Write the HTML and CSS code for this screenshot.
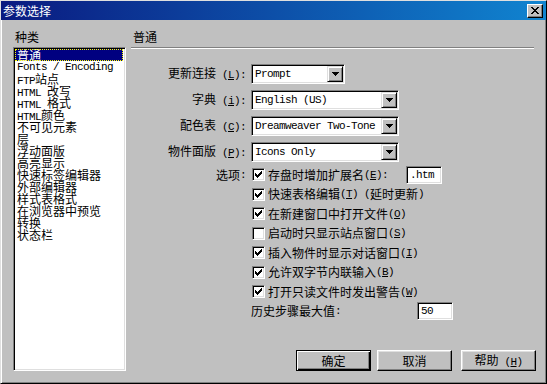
FILE: index.html
```html
<!DOCTYPE html>
<html lang="zh-CN">
<head>
    <meta charset="UTF-8">
    <title>参数选择</title>
    <link rel="stylesheet" href="styles.css">
</head>
<body>
<div class="window">
    <div class="titlebar">
        <span class="title">参数选择</span>
        <span class="close">
            <svg width="8" height="7" viewBox="0 0 8 7" shape-rendering="crispEdges"><path d="M0 0h2v1h-2z M6 0h2v1h-2z M1 1h2v1h-2z M5 1h2v1h-2z M2 2h4v1h-4z M3 3h2v1h-2z M2 4h4v1h-4z M1 5h2v1h-2z M5 5h2v1h-2z M0 6h2v1h-2z M6 6h2v1h-2z" fill="#000"/></svg>
        </span>
    </div>
    <div class="main">
        <div class="side">
            <div class="side-label">种类</div>
            <ul class="list">
                <li class="sel">普通</li>
                <li class="en">Fonts / Encoding</li>
                <li><span class="en">FTP</span>站点</li>
                <li><span class="en">HTML </span>改写</li>
                <li><span class="en">HTML </span>格式</li>
                <li><span class="en">HTML</span>颜色</li>
                <li>不可见元素</li>
                <li>层</li>
                <li>浮动面版</li>
                <li>高亮显示</li>
                <li>快速标签编辑器</li>
                <li>外部编辑器</li>
                <li>样式表格式</li>
                <li>在浏览器中预览</li>
                <li>转换</li>
                <li>状态栏</li>
            </ul>
        </div>
        <div class="panel">
            <div class="panel-head">普通</div>
            <div class="form">
                <div class="lbl">更新连接<span class="en"> (<u>L</u>):</span></div>
                <div class="combo short"><span class="val en">Prompt</span><span class="drop"><svg width="7" height="4" viewBox="0 0 7 4" shape-rendering="crispEdges"><path d="M0 0h7v1h-1v1h-1v1h-1v1h-1v-1h-1v-1h-1v-1h-1z" fill="#000"/></svg></span></div>
                <div class="lbl">字典<span class="en"> (<u>i</u>):</span></div>
                <div class="combo"><span class="val en">English (US)</span><span class="drop"><svg width="7" height="4" viewBox="0 0 7 4" shape-rendering="crispEdges"><path d="M0 0h7v1h-1v1h-1v1h-1v1h-1v-1h-1v-1h-1v-1h-1z" fill="#000"/></svg></span></div>
                <div class="lbl">配色表<span class="en"> (<u>C</u>):</span></div>
                <div class="combo"><span class="val en">Dreamweaver Two-Tone</span><span class="drop"><svg width="7" height="4" viewBox="0 0 7 4" shape-rendering="crispEdges"><path d="M0 0h7v1h-1v1h-1v1h-1v1h-1v-1h-1v-1h-1v-1h-1z" fill="#000"/></svg></span></div>
                <div class="lbl">物件面版<span class="en"> (<u>P</u>):</span></div>
                <div class="combo"><span class="val en">Icons Only</span><span class="drop"><svg width="7" height="4" viewBox="0 0 7 4" shape-rendering="crispEdges"><path d="M0 0h7v1h-1v1h-1v1h-1v1h-1v-1h-1v-1h-1v-1h-1z" fill="#000"/></svg></span></div>
            </div>
            <div class="opts">
                <div class="lbl">选项<span class="en">:</span></div>
                <div class="checks">
                    <div class="row">
                        <span class="box on"></span>存盘时增加扩展名<span class="en"> (<u>E</u>):</span>
                        <span class="field ext en">.htm</span>
                    </div>
                    <div class="row"><span class="box on"></span>快速表格编辑<span class="en"> (<u>T</u>) (</span>延时更新<span class="en">)</span></div>
                    <div class="row"><span class="box on"></span>在新建窗口中打开文件<span class="en"> (<u>O</u>)</span></div>
                    <div class="row"><span class="box"></span>启动时只显示站点窗口<span class="en"> (<u>S</u>)</span></div>
                    <div class="row"><span class="box on"></span>插入物件时显示对话窗口<span class="en"> (<u>I</u>)</span></div>
                    <div class="row"><span class="box on"></span>允许双字节内联输入<span class="en"> (<u>B</u>)</span></div>
                    <div class="row"><span class="box on"></span>打开只读文件时发出警告<span class="en"> (<u>W</u>)</span></div>
                    <div class="row history">历史步骤最大值<span class="en">:</span>
                        <span class="field steps en">50</span>
                    </div>
                </div>
            </div>
            <div class="buttons">
                <button class="btn def">确定</button>
                <button class="btn cancel">取消</button>
                <button class="btn help">帮助<span class="en"> (<u>H</u>)</span></button>
            </div>
        </div>
    </div>
</div>
</body>
</html>
```
FILE: styles.css
```css
* {
    margin: 0;
    padding: 0;
    box-sizing: border-box;
}

body {
    font-family: "Noto Sans CJK SC", "Liberation Sans", sans-serif;
    font-size: 12px;
    color: #000;
    background: #c0c0c0;
}

.en {
    font-family: "Liberation Mono", monospace;
    font-size: 11px;
    letter-spacing: -0.6px;
}

.window {
    width: 547px;
    height: 384px;
    background: #c0c0c0;
    border: 1px solid;
    border-color: #dfdfdf #000 #000 #dfdfdf;
    box-shadow: inset 1px 1px #fff, inset -1px -1px #808080;
    display: flex;
    flex-direction: column;
}

/* title bar */
.titlebar {
    height: 19px;
    flex: none;
    background: linear-gradient(to right, #0a1a80, #1084d0);
    color: #fff;
    display: flex;
    align-items: center;
    padding-left: 2px;
}

.title {
    flex: 1;
    line-height: 12px;
}

.close {
    width: 16px;
    height: 14px;
    margin-right: 3px;
    background: #c0c0c0;
    border: 1px solid;
    border-color: #fff #000 #000 #fff;
    box-shadow: inset -1px -1px #808080;
    display: flex;
    align-items: center;
    justify-content: center;
}

.close svg {
    display: block;
}

.main {
    flex: 1;
    display: flex;
}

/* category list */
.side {
    width: 130px;
    flex: none;
    padding: 11px 0 0 12px;
}

.side-label {
    line-height: 12px;
    height: 12px;
    margin: 0 0 4px 2px;
}

.list {
    list-style: none;
    width: 113px;
    height: 324px;
    background: #fff;
    border: 1px solid;
    border-color: #808080 #fff #fff #808080;
    box-shadow: inset 1px 1px #000, inset -1px -1px #dfdfdf;
    padding: 1px;
}

.list li {
    height: 12px;
    line-height: 12px;
    padding-left: 2px;
    white-space: nowrap;
}

.list li.sel {
    background: #000080;
    color: #fff;
    outline: 1px dotted #ffff00;
    outline-offset: -1px;
    margin-right: 1px;
}

/* right panel */
.panel {
    flex: 1;
    padding-right: 10px;
    display: flex;
    flex-direction: column;
}

.panel-head {
    padding: 11px 0 4px 2px;
    line-height: 12px;
    height: 28px;
    margin-right: 2px;
    border-bottom: 1px solid #808080;
    box-shadow: 0 1px #fff;
}

.form {
    margin-top: 16px;
    display: grid;
    grid-template-columns: 115px auto;
    column-gap: 5px;
    row-gap: 6px;
    align-items: center;
    justify-items: start;
}

.lbl {
    justify-self: end;
    white-space: nowrap;
    line-height: 12px;
}

.combo {
    width: 148px;
    height: 20px;
    background: #fff;
    border: 1px solid;
    border-color: #808080 #fff #fff #808080;
    box-shadow: inset 1px 1px #000, inset -1px -1px #dfdfdf;
    padding: 1px;
    display: flex;
    align-items: center;
}

.combo.short {
    width: 94px;
}

.val {
    flex: 1;
    padding-left: 2px;
    white-space: nowrap;
    overflow: hidden;
}

.drop {
    width: 16px;
    height: 16px;
    flex: none;
    background: #c0c0c0;
    border: 1px solid;
    border-color: #dfdfdf #000 #000 #dfdfdf;
    box-shadow: inset 1px 1px #fff, inset -1px -1px #808080;
    display: flex;
    align-items: center;
    justify-content: center;
}

.drop svg {
    display: block;
}

/* options */
.opts {
    margin-top: 3px;
    display: grid;
    grid-template-columns: 115px auto;
    column-gap: 5px;
    align-items: start;
}

.opts .lbl {
    height: 19.5px;
    display: flex;
    align-items: center;
}

.row {
    height: 19.5px;
    display: flex;
    align-items: center;
    white-space: nowrap;
    line-height: 12px;
}

.box {
    width: 13px;
    height: 13px;
    flex: none;
    margin: 0 3px 0 1px;
    background: #fff;
    border: 1px solid;
    border-color: #808080 #fff #fff #808080;
    box-shadow: inset 1px 1px #000, inset -1px -1px #dfdfdf;
}

.box.on {
    background: #fff url("data:image/svg+xml;utf8,<svg xmlns='http://www.w3.org/2000/svg' width='7' height='7' viewBox='0 0 7 7' shape-rendering='crispEdges'><path d='M6 0h1v3h-1v1h-1v1h-1v1h-1v1h-1v-1h-1v-1h-1v-3h1v1h1v1h1v-1h1v-1h1z' fill='black'/></svg>") no-repeat 2px 2px;
}

.field {
    height: 18px;
    width: 36px;
    margin-left: auto;
    background: #fff;
    border: 1px solid;
    border-color: #808080 #fff #fff #808080;
    box-shadow: inset 1px 1px #000, inset -1px -1px #dfdfdf;
    padding-left: 3px;
    display: flex;
    align-items: center;
}

.field.ext {
    margin-right: 94px;
}

.field.steps {
    margin-right: 83px;
}

/* buttons */
.buttons {
    margin-top: 29px;
    display: flex;
    justify-content: flex-end;
}

.btn {
    width: 75px;
    height: 21px;
    font-family: inherit;
    font-size: 12px;
    background: #c0c0c0;
    color: #000;
    border: 1px solid;
    border-color: #fff #000 #000 #fff;
    box-shadow: inset -1px -1px #808080, inset 1px 1px #dfdfdf;
    line-height: 12px;
}

.btn.def {
    border-color: #000;
    box-shadow: inset 1px 1px #fff, inset -1px -1px #000, inset -2px -2px #808080;
}

.btn.cancel {
    margin-left: 6px;
}

.btn.help {
    margin-left: 9px;
}
```
